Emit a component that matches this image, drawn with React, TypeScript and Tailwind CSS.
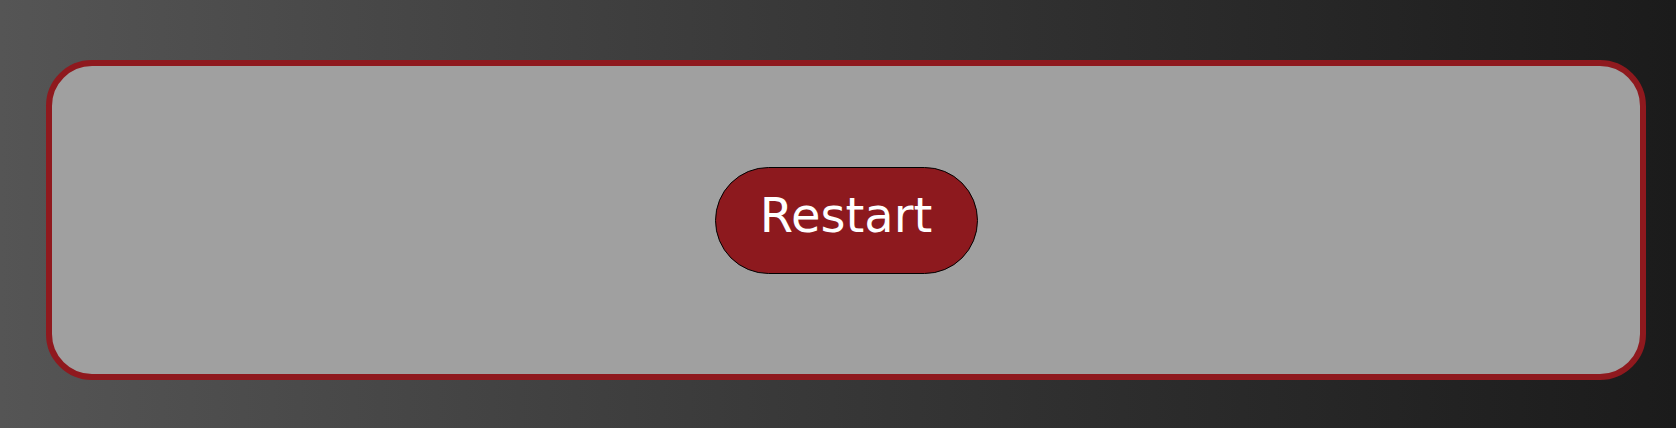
export default function App() {
  return (
    <div className="w-[1676px] h-[428px] bg-gradient-to-r from-[#555555] to-[#1b1b1b] pt-[60px] pl-[46px]">
      <div className="w-[1600px] h-[320px] rounded-[46px] border-[6px] border-[#8f191e] bg-[#a0a0a0] flex items-center justify-center">
        <button className="w-[263px] h-[107px] rounded-full border border-black bg-[#8d191e] text-white text-[48px] leading-none flex items-center justify-center pb-[10px] font-['DejaVu_Sans',sans-serif]">
          Restart
        </button>
      </div>
    </div>
  );
}
